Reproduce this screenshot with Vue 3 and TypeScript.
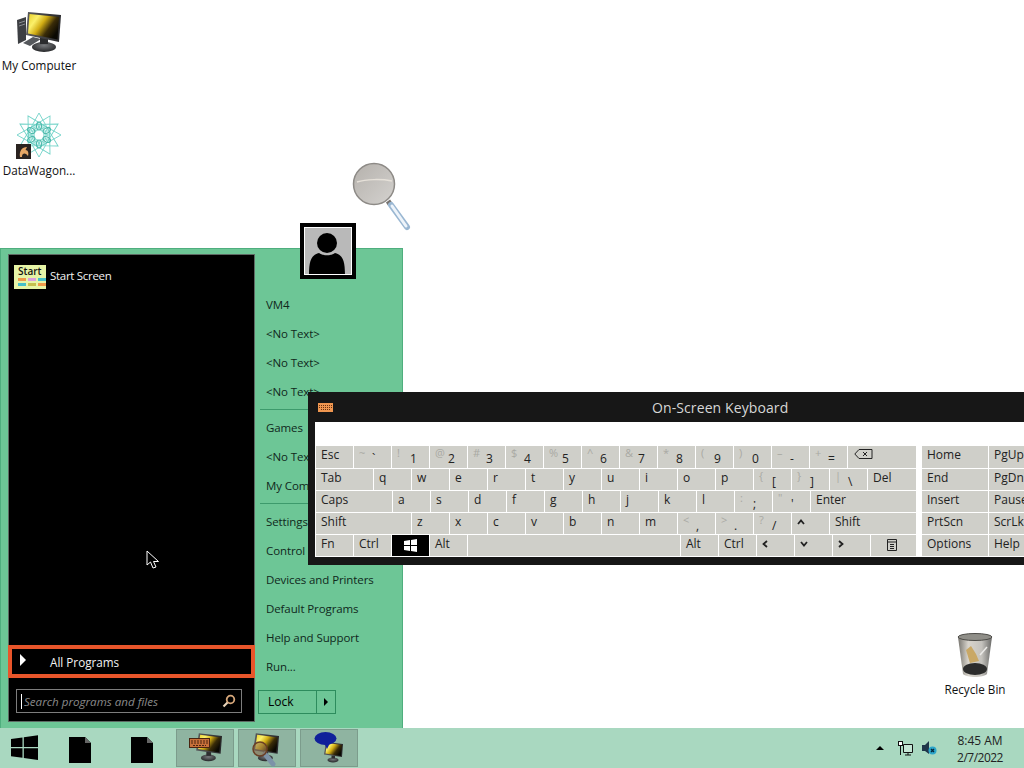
<template>
  <div class="desktop">
    <svg class="defs" width="0" height="0">
      <defs>
        <linearGradient id="screen" x1="0" y1="0" x2="1" y2="0.6">
          <stop offset="0" stop-color="#e8d02a" />
          <stop offset="0.28" stop-color="#fbf06a" />
          <stop offset="0.5" stop-color="#d2ad14" />
          <stop offset="0.75" stop-color="#3a2c08" />
          <stop offset="1" stop-color="#0b0903" />
        </linearGradient>
        <linearGradient id="bezel" x1="0" y1="0" x2="1" y2="0">
          <stop offset="0" stop-color="#5a5a5c" />
          <stop offset="1" stop-color="#27272a" />
        </linearGradient>
        <radialGradient id="stand" cx="0.5" cy="0.35" r="0.7">
          <stop offset="0" stop-color="#77797c" />
          <stop offset="1" stop-color="#1e1f21" />
        </radialGradient>
        <linearGradient id="lens" x1="0" y1="0" x2="1" y2="1">
          <stop offset="0" stop-color="#b5b1ac" />
          <stop offset="1" stop-color="#d4d2cf" />
        </linearGradient>
        <linearGradient id="bin" x1="0" y1="0" x2="1" y2="0">
          <stop offset="0" stop-color="#77756f" />
          <stop offset="0.3" stop-color="#d8d4cc" />
          <stop offset="0.7" stop-color="#c4c2bd" />
          <stop offset="1" stop-color="#6a6a68" />
        </linearGradient>
        <symbol id="monitor" viewBox="0 0 44 44">
          <ellipse cx="24" cy="38" rx="11" ry="5" fill="url(#stand)" />
          <rect x="21" y="29" width="7" height="6" fill="#2e2e30" />
          <path d="M10 2 44 6 42 32 6 27Z" fill="url(#bezel)" />
          <path d="M12 4 42 8 40 30 9 25Z" fill="url(#screen)" />
        </symbol>
      </defs>
    </svg>

    <!-- desktop icons -->
    <div class="icon my-computer">
      <svg width="44" height="41" viewBox="0 0 44 41">
        <path d="M0 9 9 6V29L1 33Z" fill="#3d3f43" />
        <path d="M2 12 8 10M2 15 8 13" stroke="#8a8d92" />
        <path d="M6 32 16 26 24 28 13 35Z" fill="#55585c" />
        <ellipse cx="27" cy="36" rx="12" ry="5" fill="url(#stand)" />
        <rect x="23" y="27" width="8" height="6" fill="#2b2c2e" />
        <path d="M11 1 44 4 42 31 9 24Z" fill="url(#bezel)" />
        <path d="M12.500 3 42 6 40.500 28.500 11 22.500Z" fill="url(#screen)" />
      </svg>
      <span>My Computer</span>
    </div>
    <div class="icon datawagon">
      <div class="star-wrap">
        <svg width="48" height="48" viewBox="-24 -24 48 48">
          <g fill="none" stroke="#72d3c8" stroke-width="0.9">
            <path v-for="a in starAngles" :key="a" :transform="`rotate(${a})`" d="M0 -22 10 -4 -10 -4Z" />
          </g>
          <g fill="none" stroke="#4fb9ac" stroke-width="1.200">
            <ellipse v-for="a in petalAngles" :key="a" :transform="`rotate(${a}) translate(0 -9)`" rx="2.500" ry="4" />
          </g>
          <circle r="4.500" fill="#fff" />
        </svg>
        <svg class="shortcut" width="15" height="15" viewBox="0 0 15 15">
          <rect width="15" height="15" fill="#2a2320" />
          <path d="M4 13C3 7 6 3 11 3L9.500 6C12 6 13 9 12 12 10 9 8 9 7 10 6 11 6 12 6 13Z" fill="#e6a765" />
        </svg>
      </div>
      <span>DataWagon...</span>
    </div>
    <div class="icon recycle">
      <svg width="36" height="45" viewBox="0 0 36 45">
        <path d="M1 4 6 41C10 45 26 45 30 41L35 4Z" fill="url(#bin)" />
        <ellipse cx="18" cy="4" rx="17" ry="3.500" fill="#8f8e88" stroke="#4d4c48" />
        <path d="M9 17 14 13 19 21 22 28 13 30Z" fill="#c9a866" />
        <path d="M23 22 30 14" stroke="#ecebe8" stroke-width="1.500" />
        <ellipse cx="18" cy="36" rx="12" ry="6" fill="#2c2c2c" />
      </svg>
      <span>Recycle Bin</span>
    </div>

    <!-- magnifier -->
    <svg class="magnifier" width="60" height="70" viewBox="0 0 60 70">
      <path d="M36 39 38 42" stroke="#77736f" stroke-width="5" />
      <path d="M39 43 55 65" stroke="#9ab7d2" stroke-width="6" stroke-linecap="round" />
      <path d="M40 44 54 64" stroke="#eef4fa" stroke-width="3" stroke-linecap="round" />
      <circle cx="22" cy="22" r="20.500" fill="url(#lens)" stroke="#8d8a86" stroke-width="1.500" />
      <path d="M5 20C14 17 30 17 40 19" stroke="#e6e1d9" stroke-width="1.500" fill="none" />
    </svg>

    <!-- start menu -->
    <div class="start-menu">
      <div class="left-pane">
        <div class="pinned">
          <div class="start-tile">
            <span>Start</span>
            <div class="tile-row"><i class="c-orange" /><i class="c-pink" /><i class="c-cyan" /></div>
            <div class="tile-row"><i class="c-cyan" /><i class="c-olive" /><i class="c-orange" /></div>
          </div>
          <span class="light start-label">Start Screen</span>
        </div>
        <div class="all-programs">
          <span class="arrow" />
          <span class="light">All Programs</span>
        </div>
        <div class="search">
          <span class="caret" />
          <span class="placeholder">Search programs and files</span>
          <svg width="14" height="14" viewBox="0 0 14 14" class="search-icon">
            <circle cx="8.500" cy="5.500" r="3.800" fill="none" stroke="#d7a77a" stroke-width="1.800" />
            <path d="M5.500 8.500 1.500 12.500" stroke="#e9d3b8" stroke-width="2.200" />
          </svg>
        </div>
      </div>
      <div class="right-pane">
        <div class="avatar">
          <svg width="48" height="48" viewBox="0 0 48 48">
            <rect width="48" height="48" fill="#b9b9b9" />
            <circle cx="23" cy="16" r="10" fill="#000" />
            <path d="M5 48C5 34 7 28 15 26 19 29 27 29 31 26 39 28 41 34 41 48Z" fill="#000" />
          </svg>
        </div>
        <div class="links">
          <template v-for="(group, i) in menuGroups" :key="i">
            <div v-if="i" class="sep" />
            <a v-for="item in group" :key="item">{{ item }}</a>
          </template>
        </div>
        <div class="lock">
          <span class="lock-label">Lock</span>
          <span class="lock-arrow"><i /></span>
        </div>
      </div>
    </div>

    <!-- on-screen keyboard -->
    <div class="osk">
      <div class="osk-title">
        <svg class="osk-icon" width="15" height="9" viewBox="0 0 15 9">
          <rect width="15" height="9" fill="#ef9650" />
          <path d="M1 2.500H14M1 4.500H14M3 6.500H12" stroke="#6b3210" stroke-dasharray="1 1" />
        </svg>
        <span class="osk-name">On-Screen Keyboard</span>
      </div>
      <div class="osk-body">
        <div class="blank" />
        <div class="keys">
          <div class="main-keys">
            <div v-for="(row, r) in mainRows" :key="r" class="key-row">
              <div
                v-for="(k, i) in row"
                :key="i"
                class="key"
                :class="{ dark: k.icon === 'win' }"
                :style="{ width: k.w + 'px' }"
              >
                <template v-if="k.shift">
                  <span class="shift-char">{{ k.shift }}</span>
                  <span class="low-char">{{ k.label }}</span>
                </template>
                <svg v-else-if="k.icon === 'back'" class="back" width="19" height="10" viewBox="0 0 19 10">
                  <path d="M5 .5H18V9.500H5L.8 5Z" fill="none" stroke="#222" />
                  <path d="M9 3 13 7M13 3 9 7" stroke="#222" />
                </svg>
                <svg v-else-if="k.icon === 'win'" width="13" height="13" viewBox="0 0 13 13" class="win">
                  <path d="M0 2 6 1V6H0ZM7 1 13 0V6H7ZM0 7H6V12L0 11ZM7 7H13V13L7 12Z" fill="#fff" />
                </svg>
                <svg v-else-if="k.icon === 'menu'" width="10" height="12" viewBox="0 0 10 12" class="menu">
                  <path d="M.5 .5H9.500V11.500H.5ZM.5 3H9.500M3 5.500H7M3 7.500H7M3 9.500H7" fill="none" stroke="#222" />
                </svg>
                <svg v-else-if="k.icon" width="8" height="6" viewBox="0 0 8 6" class="chev" :class="k.icon">
                  <path d="M1 5 4 1.500 7 5" fill="none" stroke="#222" stroke-width="1.800" />
                </svg>
                <span v-else class="plain">{{ k.label }}</span>
              </div>
            </div>
          </div>
          <div class="side-keys">
            <div v-for="row in sideRows" :key="row[0]" class="key-row">
              <div class="key side-a"><span class="plain">{{ row[0] }}</span></div>
              <div class="key side-b"><span class="plain">{{ row[1] }}</span></div>
            </div>
          </div>
        </div>
      </div>
    </div>

    <!-- cursor -->
    <svg class="cursor" width="14" height="20" viewBox="0 0 14 20">
      <path d="M1 1V15L4.500 12 7 18 10 17 7.500 11.500H12.500Z" fill="#000" stroke="#fff" />
    </svg>

    <!-- taskbar -->
    <div class="taskbar">
      <div class="tb-start">
        <svg width="27" height="25" viewBox="0 0 27 25">
          <path d="M0 4 11.500 2.500V12H0ZM12.800 2.300 27 .3V12H12.800ZM0 13.300H11.500V22.800L0 21.300ZM12.800 13.300H27V25L12.800 23Z" fill="#000" />
        </svg>
      </div>
      <div v-for="n in 2" :key="n" class="tb-file">
        <svg width="22" height="26" viewBox="0 0 22 26">
          <path d="M0 0H16L22 6V26H0Z" fill="#000" />
          <path d="M16 0V6H22" fill="#666" />
        </svg>
      </div>
      <div class="tb-app">
        <svg class="tb-mon" width="30" height="30" viewBox="0 0 44 44"><use href="#monitor" /></svg>
        <svg class="tb-kbd" width="21" height="10" viewBox="0 0 21 10">
          <rect x="0.5" y="0.5" width="20" height="9" fill="#c8703a" stroke="#4a2410" />
          <path d="M2 3H19M2 5H19M4 7.500H17" stroke="#4a2410" stroke-dasharray="2 1" />
        </svg>
      </div>
      <div class="tb-app">
        <svg class="tb-mon tb-mid" width="30" height="30" viewBox="0 0 44 44"><use href="#monitor" /></svg>
        <svg class="tb-glass" width="28" height="30" viewBox="0 0 28 30">
          <path d="M14 14 22 24" stroke="#7d93a8" stroke-width="5" stroke-linecap="round" />
          <circle cx="9" cy="9" r="7" fill="#8a6a4a" fill-opacity="0.55" stroke="#6b3f25" stroke-width="1.500" />
        </svg>
      </div>
      <div class="tb-app">
        <svg class="tb-mon tb-small" width="22" height="22" viewBox="0 0 44 44"><use href="#monitor" /></svg>
        <svg class="tb-bubble" width="23" height="17" viewBox="0 0 23 17">
          <ellipse cx="11.500" cy="6.500" rx="11" ry="6.500" fill="#10209a" />
          <path d="M10 11 13 17 16 11Z" fill="#10209a" />
        </svg>
      </div>
      <div class="tray">
        <span class="tray-up" />
        <svg width="15" height="15" viewBox="0 0 15 15" class="tray-net">
          <path d="M5.500 3.500H14.500V11.500H5.500Z" fill="#c5e6d5" stroke="#111" />
          <path d="M7 14H13M10 12V14" stroke="#111" />
          <rect x="0.5" y="0.5" width="4" height="4" fill="#fff" stroke="#111" />
          <path d="M2.500 5V14" stroke="#111" />
        </svg>
        <svg width="15" height="14" viewBox="0 0 15 14" class="tray-vol">
          <path d="M0 4H3L7 0V13L3 10H0Z" fill="#20364a" />
          <circle cx="10.500" cy="9.500" r="4" fill="#2ca5c9" />
          <path d="M9 8 12 11M12 8 9 11" stroke="#06283a" stroke-width="1.400" />
        </svg>
        <div class="clock">
          <span>8:45 AM</span>
          <span class="date">2/7/2022</span>
        </div>
      </div>
    </div>
  </div>
</template>

<script setup lang="ts">
interface KeyDef {
  label: string
  w: number
  shift?: string
  icon?: string
}

const starAngles = [0, 30, 60, 90, 120, 150, 180, 210, 240, 270, 300, 330]
const petalAngles = [0, 60, 120, 180, 240, 300]

const menuGroups = [
  ['VM4', '<No Text>', '<No Text>', '<No Text>'],
  ['Games', '<No Text>', 'My Computer'],
  ['Settings', 'Control Panel', 'Devices and Printers', 'Default Programs', 'Help and Support', 'Run...'],
]

const pair = (shift: string, label: string): KeyDef => ({ label, shift, w: 37 })
const letters = (s: string): KeyDef[] => s.split('').map((label) => ({ label, w: 37 }))

const mainRows: KeyDef[][] = [
  [
    { label: 'Esc', w: 38 },
    pair('~', '`'), pair('!', '1'), pair('@', '2'), pair('#', '3'), pair('$', '4'), pair('%', '5'),
    pair('^', '6'), pair('&', '7'), pair('*', '8'), pair('(', '9'), pair(')', '0'), pair('–', '-'), pair('+', '='),
    { label: 'back', icon: 'back', w: 68 },
  ],
  [
    { label: 'Tab', w: 58 },
    ...letters('qwertyuiop'),
    pair('{', '['), pair('}', ']'), pair('|', '\\'),
    { label: 'Del', w: 48 },
  ],
  [
    { label: 'Caps', w: 77 },
    ...letters('asdfghjkl'),
    pair(':', ';'), pair('"', "'"),
    { label: 'Enter', w: 105 },
  ],
  [
    { label: 'Shift', w: 96 },
    ...letters('zxcvbnm'),
    pair('<', ','), pair('>', '.'), pair('?', '/'),
    { label: 'up', icon: 'up', w: 37 },
    { label: 'Shift', w: 86 },
  ],
  [
    { label: 'Fn', w: 38 },
    { label: 'Ctrl', w: 37 },
    { label: 'win', icon: 'win', w: 37 },
    { label: 'Alt', w: 37 },
    { label: ' ', w: 212 },
    { label: 'Alt', w: 37 },
    { label: 'Ctrl', w: 37 },
    { label: 'left', icon: 'left', w: 37 },
    { label: 'down', icon: 'down', w: 37 },
    { label: 'right', icon: 'right', w: 37 },
    { label: 'menu', icon: 'menu', w: 45 },
  ],
]

const sideRows = [
  ['Home', 'PgUp'],
  ['End', 'PgDn'],
  ['Insert', 'Pause'],
  ['PrtScn', 'ScrLk'],
  ['Options', 'Help'],
]
</script>

<style>
html,
body {
  margin: 0;
  background: #fff;
}
</style>

<style scoped>
.desktop {
  position: relative;
  width: 1024px;
  height: 768px;
  overflow: hidden;
  background: #fff;
  font-family: "Open Sans", "Noto Sans", sans-serif;
  font-size: 12px;
  color: #000;
}
.defs {
  position: absolute;
}
.icon {
  position: absolute;
  width: 78px;
  display: flex;
  flex-direction: column;
  align-items: center;
  gap: 5px;
  color: #111;
  font-size: 11.7px;
}
.icon svg {
  display: block;
}
.my-computer {
  left: 0;
  top: 11px;
}
.datawagon {
  left: 0;
  top: 111px;
  gap: 3px;
}
.star-wrap {
  position: relative;
}
.shortcut {
  position: absolute;
  left: 1px;
  bottom: 0;
}
.recycle {
  left: 936px;
  top: 633px;
  gap: 3px;
}
.magnifier {
  position: absolute;
  left: 352px;
  top: 162px;
}
.start-menu {
  position: absolute;
  left: 0;
  top: 248px;
  width: 403px;
  height: 480px;
  box-sizing: border-box;
  display: flex;
  padding: 5px 0 6px 7px;
  background: #6dc696;
  border: 1px solid #4fae7e;
  border-bottom: 0;
}
.left-pane {
  width: 247px;
  display: flex;
  flex-direction: column;
  background: #000;
  border: 1px solid #5e6a64;
  box-sizing: border-box;
}
.light {
  color: #f2f2f2;
  font-size: 11.7px;
}
.pinned {
  flex: 1;
  display: flex;
  align-items: flex-start;
  gap: 4px;
  padding: 10px 0 0 5px;
}
.start-label {
  margin-top: 3px;
  font-size: 11.5px;
  letter-spacing: -0.3px;
}
.start-tile {
  width: 32px;
  height: 24px;
  flex-shrink: 0;
  background: #e6f4a6;
  color: #111;
  font-size: 10px;
  font-weight: 600;
  line-height: 10px;
  padding: 1px 0 0 4px;
  box-sizing: border-box;
  overflow: hidden;
}
.start-tile span {
  display: block;
}
.tile-row {
  display: flex;
  gap: 2px;
  margin-top: 2px;
}
.tile-row i {
  width: 8px;
  height: 3px;
  flex-shrink: 0;
}
.c-orange {
  background: #ef9a4a;
}
.c-pink {
  background: #d9a0dd;
}
.c-cyan {
  background: #46c0c8;
}
.c-olive {
  background: #c4c04e;
}
.all-programs {
  height: 33px;
  margin: 0 -1px;
  box-sizing: border-box;
  border: 4px solid #e8552a;
  display: flex;
  align-items: center;
  padding-left: 8px;
  gap: 24px;
  background: #000;
}
.arrow {
  width: 0;
  height: 0;
  margin-top: -4px;
  border-left: 6px solid #fff;
  border-top: 6px solid transparent;
  border-bottom: 6px solid transparent;
}
.search {
  height: 24px;
  margin: 11px 0 8px 7px;
  width: 226px;
  box-sizing: border-box;
  border: 1px solid #7d7d7d;
  display: flex;
  align-items: center;
  padding: 0 5px 0 4px;
  gap: 2px;
}
.caret {
  width: 1px;
  height: 15px;
  background: #fff;
}
.placeholder {
  flex: 1;
  font-style: italic;
  font-size: 11.6px;
  color: #8a8a8a;
}
.search-icon {
  flex-shrink: 0;
}
.right-pane {
  position: relative;
  flex: 1;
  display: flex;
  flex-direction: column;
  padding-left: 3px;
}
.avatar {
  position: absolute;
  left: 45px;
  top: -31px;
  width: 48px;
  height: 48px;
  border: 4px solid #000;
  background: #000;
  outline: 1px solid #fff;
  outline-offset: -5px;
}
.avatar svg {
  display: block;
}
.links {
  display: flex;
  flex-direction: column;
  margin-top: 36px;
  flex: 1;
  font-size: 11.5px;
  letter-spacing: -0.1px;
}
.links a {
  display: block;
  height: 29px;
  line-height: 29px;
  padding-left: 8px;
  color: #10281c;
  white-space: nowrap;
}
.sep {
  height: 1px;
  flex-shrink: 0;
  margin: 3px 0 3px 2px;
  width: 136px;
  background: #3d9a6c;
}
.lock {
  display: flex;
  width: 78px;
  height: 24px;
  box-sizing: border-box;
  border: 1px solid #2d8c5d;
  margin-bottom: 8px;
}
.lock-label {
  width: 58px;
  line-height: 22px;
  padding-left: 9px;
  box-sizing: border-box;
  border-right: 1px solid #2d8c5d;
}
.lock-arrow {
  flex: 1;
  display: flex;
  align-items: center;
  justify-content: center;
}
.lock-arrow i {
  border-left: 4px solid #000;
  border-top: 4px solid transparent;
  border-bottom: 4px solid transparent;
}
.osk {
  position: absolute;
  left: 308px;
  top: 392px;
  width: 760px;
  height: 173px;
  background: #171717;
  box-sizing: border-box;
}
.osk-title {
  position: relative;
  height: 30px;
  display: flex;
  align-items: center;
}
.osk-icon {
  margin-left: 10px;
  margin-top: 1px;
}
.osk-name {
  position: absolute;
  left: 344px;
  top: 6px;
  font-size: 14px;
  letter-spacing: 0.1px;
  color: #d6d6d6;
}
.osk-body {
  margin-left: 7px;
  background: #fff;
  height: 135px;
}
.blank {
  height: 24px;
}
.keys {
  display: flex;
  gap: 6px;
  background: #fff;
}
.main-keys,
.side-keys {
  display: flex;
  flex-direction: column;
  gap: 1px;
}
.key-row {
  display: flex;
  gap: 1px;
  height: 21px;
}
.key-row:first-child {
  height: 22px;
}
.key {
  position: relative;
  height: 100%;
  flex-shrink: 0;
  background: #cfcfc9;
  color: #222;
  box-sizing: border-box;
}
.main-keys .key:first-child {
  border-left: 1px solid #fff;
}
.key.dark {
  background: #000;
}
.side-a {
  width: 66px;
}
.side-b {
  width: 66px;
}
.plain {
  position: absolute;
  left: 5px;
  top: 0;
  line-height: 18px;
}
.shift-char {
  position: absolute;
  left: 5px;
  top: 0;
  font-size: 11px;
  color: #a9a9a3;
  line-height: 14px;
}
.low-char {
  position: absolute;
  left: 18px;
  top: 4px;
  line-height: 18px;
}
.back {
  position: absolute;
  left: 6px;
  top: 3px;
}
.win {
  position: absolute;
  left: 12px;
  top: 4px;
}
.menu {
  position: absolute;
  left: 16px;
  top: 4px;
}
.chev {
  position: absolute;
  left: 5px;
  top: 6px;
}
.chev.down {
  transform: rotate(180deg);
}
.chev.left {
  transform: rotate(-90deg);
  left: 4px;
}
.chev.right {
  transform: rotate(90deg);
  left: 4px;
}
.cursor {
  position: absolute;
  left: 146px;
  top: 550px;
}
.taskbar {
  position: absolute;
  left: 0;
  right: 0;
  bottom: 0;
  height: 40px;
  display: flex;
  align-items: center;
  background: #a9d8c0;
}
.tb-start {
  width: 49px;
  display: flex;
  justify-content: center;
  margin-top: -2px;
}
.tb-file {
  width: 62px;
  display: flex;
  justify-content: center;
  margin-top: 4px;
}
.tb-start svg,
.tb-file svg {
  display: block;
}
.tb-file:nth-child(3) {
  margin-right: 3px;
}
.tb-app {
  position: relative;
  width: 58px;
  height: 38px;
  margin-right: 4px;
  background: #8fb4a1;
  border: 1px solid #7c9c8c;
  box-sizing: border-box;
}
.tb-mon {
  position: absolute;
  left: 15px;
  top: 2px;
}
.tb-mid {
  left: 10px;
}
.tb-small {
  left: 20px;
  top: 11px;
}
.tb-kbd {
  position: absolute;
  left: 12px;
  top: 8px;
}
.tb-glass {
  position: absolute;
  left: 12px;
  top: 10px;
}
.tb-bubble {
  position: absolute;
  left: 13px;
  top: 2px;
}
.tray {
  position: absolute;
  right: 0;
  top: 0;
  height: 40px;
  display: flex;
  align-items: center;
}
.tray-up {
  width: 0;
  height: 0;
  border-left: 4px solid transparent;
  border-right: 4px solid transparent;
  border-bottom: 4px solid #000;
  margin-right: 14px;
}
.tray-vol {
  margin-left: 9px;
}
.clock {
  display: flex;
  flex-direction: column;
  align-items: center;
  width: 60px;
  margin: 2px 14px 0 13px;
  line-height: 17px;
  color: #222;
}
.date {
  letter-spacing: -0.5px;
}
</style>
